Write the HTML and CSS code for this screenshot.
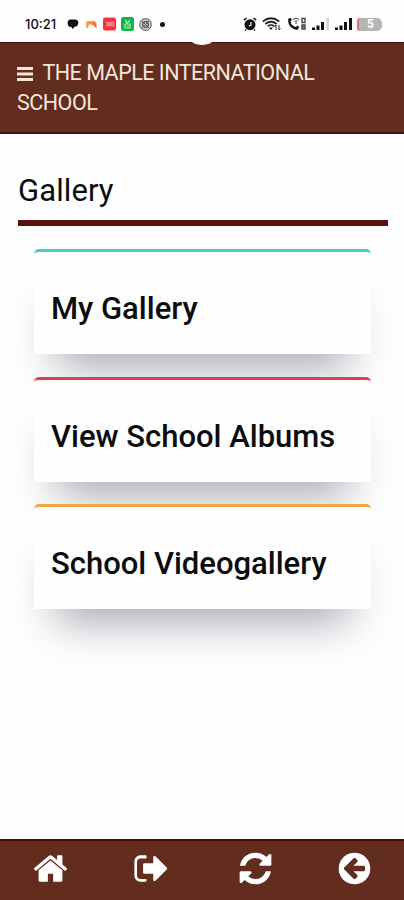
FILE: index.html
```html
<!DOCTYPE html>
<html lang="en">
  <head>
    <meta charset="UTF-8" />
    <meta name="viewport" content="width=device-width, initial-scale=1.0" />
    <title>The Maple International School - Gallery</title>
    <link rel="stylesheet" href="styles.css">
  </head>
  <body>
    <div class="status-bar">
      <div class="status-left">
        <span class="time">10:21</span>
        <svg class="chat" width="12" height="12" viewBox="0 0 12 12"><path d="M3 1.500h5.500a3 3 0 0 1 2.600 4.200A3 3 0 0 1 8 8.500L5.500 11 4.500 9A3.200 3.200 0 0 1 .8 5.500 3.200 3.200 0 0 1 3 1.500z" fill="#111"/></svg>
        <svg class="mail" width="11" height="9" viewBox="0 0 11 9"><path d="M0 2.500Q0 1 2 1l3 2L3 5 2 8H0z" fill="#ffa04d"/><path d="M2 1h6l2.500 2v5.500L7 5 3.500 4z" fill="#fb6b3c"/><path d="M1 1h7L5.500 4z" fill="#ff9d3f"/></svg>
        <svg class="app" width="13" height="14" viewBox="0 0 14 14"><rect width="14" height="14" rx="2.500" fill="#f5333f"/><path d="M3 5h2v4H3M6 5h2v4H6zM9.500 5h2v4h-2z" fill="none" stroke="#ffa3a8"/></svg>
        <svg class="app" width="13" height="14" viewBox="0 0 13 14"><rect width="13" height="14" rx="2.500" fill="#12b34c"/><path d="M4 3l2.500 3L9 3M4 7h5v4H4zM6 9h2" fill="none" stroke="#a7f0a8" stroke-width="1.200"/></svg>
        <svg class="app" width="13" height="13" viewBox="0 0 13 13"><circle cx="6.500" cy="6.500" r="5.800" fill="#ccc" stroke="#777" stroke-width="1.200"/><circle cx="6.500" cy="6.500" r="2.800" fill="none" stroke="#444" stroke-width="1.200"/><path d="M3 3l7 7M10 3l-7 7" stroke="#555"/></svg>
        <span class="more-dot"></span>
      </div>
      <div class="status-right">
        <svg width="14" height="14" viewBox="0 0 14 14"><circle cx="7" cy="7.700" r="5.500" fill="#111"/><path d="M.8 3.200L3.500 1M13.200 3.200L10.500 1M3 12.500l-1 1M11 12.500l1 1" stroke="#111" stroke-width="1.500"/><path d="M8 5v3.200L5.800 9" fill="none" stroke="#fff" stroke-width="1.200"/></svg>
        <svg width="19" height="14" viewBox="0 0 19 14"><path d="M.8 4.500Q9 -2 17.200 4.500M3.300 7Q9 2.500 14.700 7M5.800 9.200Q9 6.800 12.200 9.200" fill="none" stroke="#222" stroke-width="1.700"/><path d="M7 10.500h4L9 13z" fill="#111"/><path d="M14 13V8M12.500 9.500L14 8M17 8v5l1.500-1.500" fill="none" stroke="#222"/></svg>
        <svg width="20" height="14" viewBox="0 0 20 14"><path d="M2.500 2.500Q2 7 5 9.500T11 11.500" fill="none" stroke="#111" stroke-width="2.400"/><path d="M1.500 2.500h3M9.500 11l2-1.500" stroke="#111" stroke-width="2.500"/><path d="M6 2.500Q9 0 12 2.500M7.500 4.500Q9 3 10.500 4.500M9 5v2" fill="none" stroke="#444"/><path d="M15 1.500h3v4h-3zM15 8h3v4h-3zM15 10h3" fill="none" stroke="#444" stroke-width="1.400"/></svg>
        <svg width="17" height="14" viewBox="0 0 17 14"><path d="M0 10.500h3V13H0zM4.500 8.500h3V13h-3zM9 5h3v8H9z" fill="#111"/><path d="M14.500 1H17v12h-2.500z" fill="#d2d2d2"/></svg>
        <svg width="17" height="14" viewBox="0 0 17 14"><path d="M0 10.500h3V13H0zM4.500 8.500h3V13h-3zM9 5h3v8H9zM14 1h3v12h-3z" fill="#111"/></svg>
        <div class="battery">5</div>
      </div>
    </div>

    <div class="header">
      <svg class="menu-icon" width="16" height="14" viewBox="0 0 16 14"><path d="M0 0h16v3H0zM0 5.500h16v3H0zM0 11h16v3H0z" fill="#f5e6dc"/></svg>
      <span class="school-name">THE MAPLE INTERNATIONAL SCHOOL</span>
    </div>

    <div class="content">
      <h1>Gallery</h1>
      <div class="cards">
        <div class="card cyan"><h2>My Gallery</h2></div>
        <div class="card red"><h2>View School Albums</h2></div>
        <div class="card orange"><h2>School Videogallery</h2></div>
      </div>
    </div>

    <div class="footer">
      <a class="nav-item home">
        <svg viewBox="0 0 1792 1792"><path d="M1472 992v480q0 26-19 45t-45 19h-384v-384h-256v384h-384q-26 0-45-19t-19-45v-480q0-1 .5-3t.5-3l575-474 575 474q1 2 1 6zm223-69l-62 74q-8 9-21 11h-3q-13 0-21-7l-692-577-692 577q-12 8-24 7-13-2-21-11l-62-74q-8-10-7-23.500t11-21.500l719-599q32-26 76-26t76 26l244 204v-195q0-14 9-23t23-9h192q14 0 23 9t9 23v408l219 182q10 8 11 21.500t-7 23.500z"/></svg>
      </a>
      <a class="nav-item logout">
        <svg viewBox="0 0 1792 1792"><path d="M704 1440q0 96-32 96H404q-119 0-203.500-84.500T116 1248V544q0-119 84.500-203.500T404 256h268q32 0 32 64v64q0 32-32 32H404q-66 0-113 47t-47 113v672q0 66 47 113t113 47h268q32 0 32 32zM1700 896q0 26-19 45l-544 544q-19 19-45 19t-45-19-19-45v-288H600q-26 0-45-19t-19-45V704q0-26 19-45t45-19h428V352q0-26 19-45t45-19 45 19l544 544q19 19 19 45z"/></svg>
      </a>
      <a class="nav-item refresh">
        <svg viewBox="0 0 1792 1792"><path d="M1639 1056q0 5-1 7-64 268-268 434.500t-478 166.500q-146 0-282.500-55t-243.500-157l-129 129q-19 19-45 19t-45-19-19-45v-448q0-26 19-45t45-19h448q26 0 45 19t19 45-19 45l-137 137q71 66 161 102t187 36q134 0 250-65t186-179q11-17 53-117 8-23 30-23h192q13 0 22.500 9.500t9.500 22.500zm25-800v448q0 26-19 45t-45 19h-448q-26 0-45-19t-19-45 19-45l138-138q-148-137-349-137-134 0-250 65t-186 179q-11 17-53 117-8 23-30 23h-199q-13 0-22.500-9.500t-9.500-22.500v-7q65-268 270-434.500t480-166.500q146 0 284 55.500t245 156.500l130-129q19-19 45-19t45 19 19 45z"/></svg>
      </a>
      <a class="nav-item">
        <svg viewBox="0 0 1792 1792"><path d="M1408 960v-128q0-26-19-45t-45-19h-502l189-189q19-19 19-45t-19-45l-91-91q-18-18-45-18t-45 18l-362 362-91 91q-18 18-18 45t18 45l91 91 362 362q18 18 45 18t45-18l91-91q18-18 18-45t-18-45l-189-189h502q26 0 45-19t19-45zm256-64q0 209-103 385.500t-279.500 279.500-385.500 103-385.500-103-279.500-279.500-103-385.500 103-385.500 279.500-279.500 385.500-103 385.500 103 279.500 279.500 103 385.500z"/></svg>
      </a>
    </div>
  </body>
</html>
```
FILE: styles.css
```css
* {
  box-sizing: border-box;
}
body {
  font-family: Roboto, sans-serif;
  margin: 0;
  height: 900px;
  background: #fefefe;
  color: #0b0c0e;
  display: flex;
  flex-direction: column;
  overflow: hidden;
}
svg {
  display: block;
  flex: none;
}
.status-bar {
  position: relative;
  height: 42px;
  padding: 6px 22px 0 25px;
  display: flex;
  justify-content: space-between;
  align-items: center;
}
/* camera cutout */
.status-bar::after {
  content: "";
  position: absolute;
  left: 191px;
  top: 35px;
  width: 22px;
  height: 10px;
  border-radius: 50%;
  background: #fefefe;
}
.status-left,
.status-right {
  display: flex;
  align-items: center;
}
.status-left {
  gap: 5px;
}
.time {
  font-family: Inter, sans-serif;
  font-size: 13px;
  font-weight: 500;
  width: 33px;
  margin-right: 4px;
}
.mail {
  margin: 0 1px 0 2px;
}
.more-dot {
  width: 5px;
  height: 5px;
  margin-left: 3px;
  border-radius: 50%;
  background: #111;
}
.status-right {
  gap: 5.5px;
}
.battery {
  width: 25px;
  height: 13px;
  border-radius: 3px 5px 5px 3px;
  border-left: 2px solid #e0737c;
  background: #b5b5b5;
  color: #fff;
  font-size: 12px;
  font-weight: 700;
  line-height: 13px;
  text-align: center;
}
.header {
  height: 92px;
  padding: 15px 80px 0 17px;
  background: #622c1f;
  border-top: 1px solid #4d0d0b;
  border-bottom: 2px solid #4d0d0b;
  color: #f5e6dc;
  font-size: 21.5px;
  line-height: 29.5px;
  letter-spacing: -0.5px;
}
.menu-icon {
  display: inline-block;
  margin-right: 5px;
  vertical-align: -1px;
}
.content {
  flex: 1;
  padding: 37px 16px 0 18px;
}
h1 {
  margin: 0;
  height: 55px;
  font-size: 31px;
  font-weight: 400;
  letter-spacing: 0.1px;
  line-height: 40px;
  border-bottom: 6px solid #58130f;
}
.cards {
  display: flex;
  flex-direction: column;
  gap: 22.5px;
  padding: 23px 17px 0 16px;
}
.card {
  height: 105px;
  padding: 38px 17px 0;
  background: #fefefe;
  border-top: 3px solid;
  border-radius: 5px 5px 1px 1px;
  box-shadow: 0 34px 45px -22px hsl(229, 6%, 66%);
}
.card h2 {
  margin: 0;
  color: #0b0c0e;
  font-size: 31px;
  font-weight: 500;
  line-height: 37px;
  white-space: nowrap;
}
.cyan {
  border-color: #47cdc7;
}
.red {
  border-color: #d94350;
}
.orange {
  border-color: #eda642;
}
.footer {
  height: 61px;
  padding-bottom: 5px;
  display: flex;
  align-items: center;
  background: #622c1f;
  border-top: 2px solid #4d0d0b;
}
.nav-item {
  flex: 1 1 0;
  display: flex;
  justify-content: center;
}
.nav-item svg {
  width: 37px;
  height: 37px;
  fill: #fff;
}
.home {
  padding-left: 1px;
}
.logout {
  padding-left: 1px;
}
.refresh {
  padding-left: 6px;
}
```
